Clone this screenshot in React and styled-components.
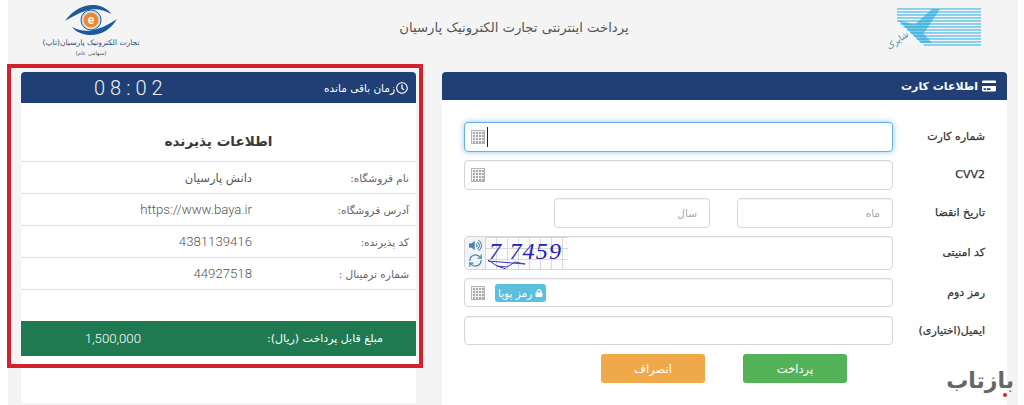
import React from 'react';
import styled, { createGlobalStyle } from 'styled-components';
import { FaCreditCard, FaRegClock, FaVolumeUp, FaLock } from 'react-icons/fa';
import { RefreshCw } from 'lucide-react';

const GlobalStyle = createGlobalStyle`
  html, body {
    margin: 0;
    padding: 0;
    background: #fff;
  }
  * {
    box-sizing: border-box;
  }
`;

const Screen = styled.div`
  position: relative;
  width: 1024px;
  height: 405px;
  overflow: hidden;
  background: #fff;
  font-family: "DejaVu Sans", "Noto Sans", sans-serif;
  padding: 0 6px 0 8px;
`;

const Page = styled.div`
  height: 100%;
  background: #f4f4f4;
  padding: 0 11px 0 13px;
`;

const TopBar = styled.header`
  height: 72px;
  padding: 0 26px 14px 21px;
  display: flex;
  justify-content: space-between;
  align-items: center;
`;

const TopTitle = styled.h1`
  margin: 0 0 4px;
  font-size: 13.2px;
  font-weight: 400;
  color: #555;
`;

const ParsianLogo = styled.div`
  width: 98px;
  align-self: flex-start;
  display: flex;
  flex-direction: column;
  align-items: center;
  padding-top: 4px;
`;

const LogoCaption = styled.span`
  font-size: ${props => props.size}px;
  line-height: 11px;
  color: ${props => props.color};
  white-space: nowrap;
`;

const Columns = styled.main`
  display: flex;
  gap: 26px;
  align-items: flex-start;
`;

const Card = styled.section`
  width: ${props => props.width}px;
  height: ${props => props.height}px;
  background: #fff;
  display: flex;
  flex-direction: column;
`;

const CardHeader = styled.div`
  height: ${props => props.height}px;
  flex: none;
  background: #203f74;
  color: #fff;
  border-radius: 4px 4px 0 0;
  display: flex;
  align-items: center;
  justify-content: space-between;
  padding: ${props => props.padding};
`;

const HeaderLabel = styled.div`
  display: flex;
  align-items: center;
  gap: ${props => props.gap}px;
  font-size: ${props => props.size}px;
  font-weight: ${props => props.weight};
`;

const Timer = styled.div`
  direction: ltr;
  font-family: Roboto, "Liberation Sans", sans-serif;
  font-weight: 300;
  font-size: 20px;
  letter-spacing: 5px;
  color: #eef2f8;
`;

const MerchantTitle = styled.h2`
  height: 59px;
  margin: 0;
  padding-top: 26px;
  text-align: center;
  font-size: 13.6px;
  line-height: 24px;
  font-weight: 700;
  color: #3a3a3a;
  border-bottom: 1px solid #dedede;
`;

const InfoRow = styled.div`
  height: 32px;
  display: grid;
  grid-template-columns: 164px 1fr;
  align-items: center;
  border-bottom: 1px solid #dedede;
`;

const InfoLabel = styled.span`
  padding-right: 7px;
  font-size: 10.5px;
  color: #666;
`;

const InfoValue = styled.span`
  font-size: ${props => (props.latin ? 13.2 : 11.5)}px;
  font-family: ${props => (props.latin ? 'Roboto, "Liberation Sans", sans-serif' : 'inherit')};
  font-weight: ${props => (props.latin ? 300 : 400)};
  color: #555;
`;

const AmountBar = styled.div`
  margin-top: 31px;
  height: 35px;
  background: #1f7a52;
  color: #fff;
  display: grid;
  grid-template-columns: 275px 120px;
  align-items: center;
`;

const AmountLabel = styled.span`
  padding-right: 33px;
  font-size: 11px;
  white-space: nowrap;
`;

const AmountValue = styled.span`
  direction: ltr;
  text-align: right;
  font-family: Roboto, "Liberation Sans", sans-serif;
  font-weight: 300;
  font-size: 13.2px;
`;

const Form = styled.form`
  padding: 22px 22px 0;
  display: flex;
  flex-direction: column;
  gap: 8px;
`;

const FormRow = styled.div`
  display: grid;
  grid-template-columns: 92px 1fr;
  align-items: center;
  height: ${props => props.height}px;
  margin-top: ${props => props.top || 0}px;
`;

const FormLabel = styled.label`
  padding-bottom: 1px;
  font-size: 11px;
  font-weight: 400;
  color: #333;
  -webkit-text-stroke: 0.25px #333;
  white-space: nowrap;
`;

const Field = styled.div`
  height: 100%;
  width: 100%;
  background: #fff;
  border: 1px solid ${props => (props.focused ? '#66afe9' : '#d6d6d6')};
  border-radius: 4px;
  box-shadow: ${props => (props.focused ? '0 0 6px rgba(102, 175, 233, 0.7)' : 'inset 0 1px 1px rgba(0, 0, 0, 0.04)')};
  display: flex;
  align-items: center;
  padding: 0 6px;
  direction: ltr;
  overflow: hidden;
`;

const DateFields = styled.div`
  height: 100%;
  display: flex;
  gap: 27px;
`;

const DateField = styled(Field)`
  width: 156px;
  direction: rtl;
  padding: 0 12px;
`;

const Placeholder = styled.span`
  font-size: 10.5px;
  color: #aaa;
`;

const Caret = styled.span`
  width: 1px;
  height: 20px;
  margin-left: 2px;
  background: #222;
`;

const CaptchaField = styled(Field)`
  padding: 0;
`;

const CaptchaTools = styled.div`
  width: 20px;
  height: 100%;
  flex: none;
  display: flex;
  flex-direction: column;
  align-items: center;
  justify-content: space-around;
  padding: 1px 0;
  background: #f1f4f7;
  color: #4a86ad;
  font-size: 13px;
`;

const CaptchaImage = styled.div`
  position: relative;
  width: 83px;
  height: 100%;
  padding-left: 4px;
  background-color: #fbfbfb;
  background-image:
    linear-gradient(#d8d8d8 1px, transparent 1px),
    linear-gradient(90deg, #d8d8d8 1px, transparent 1px);
  background-size: 11px 11px;
  font-family: "Liberation Serif", serif;
  font-style: italic;
  font-size: 24px;
  line-height: 28px;
  letter-spacing: 1.2px;
  color: #2222b4;
  white-space: pre;
`;

const CaptchaScratch = styled.svg`
  position: absolute;
  left: 0;
  top: 0;
`;

const Badge = styled.span`
  margin-left: 10px;
  height: 18px;
  padding: 0 3px;
  display: inline-flex;
  align-items: center;
  gap: 3px;
  border-radius: 3px;
  background: #5bc0de;
  color: #fff;
  font-size: 10.5px;
  direction: rtl;
  white-space: nowrap;
`;

const Buttons = styled.div`
  margin-top: 1px;
  padding-right: 138px;
  display: flex;
  gap: 38px;
`;

const ActionButton = styled.button`
  width: 104px;
  height: 29px;
  border: none;
  border-radius: 3px;
  background: ${props => props.color};
  color: #fff;
  font-family: inherit;
  font-size: 11.5px;
`;

const Highlight = styled.div`
  position: absolute;
  left: 7px;
  top: 64px;
  width: 416px;
  height: 304px;
  border: 4px solid #d2222e;
  pointer-events: none;
`;

const Watermark = styled.div`
  position: absolute;
  right: 10px;
  bottom: 8px;
  font-size: 22px;
  line-height: 32px;
  font-weight: 700;
  color: #666;
`;

const WatermarkDot = styled.span`
  position: absolute;
  right: 7px;
  bottom: 0;
  width: 4px;
  height: 4px;
  border-radius: 50%;
  background: #d2222e;
`;

const ShaparakMark = () => (
  <svg width="93" height="46" viewBox="0 0 93 46" style={{ overflow: 'visible' }}>
    {Array.from({ length: 13 }, (_, i) => {
      const y = 2 + i * 3;
      const left = 9 + Math.max(0, y - 14) * 1.1;
      return <rect key={i} x={left} y={y} width={93 - left} height="1.9" fill="#86cfea" />;
    })}
    <path d="M10 14 L28 19 L44 37 L33 37Z M24 21 L44 3 L52 3 L36 27Z" fill="#4cb8e0" />
    {Array.from({ length: 12 }, (_, i) => (
      <rect key={i} x="9" y={4.2 + i * 3} width="45" height="0.5" fill="#fff" opacity="0.55" />
    ))}
    <text x="10" y="37" fontSize="8.5" fill="#3f8fa5" textAnchor="middle" transform="rotate(-35 10 35)">شاپرک</text>
  </svg>
);

const ParsianMark = () => (
  <svg width="52" height="33" viewBox="0 0 52 33">
    <path d="M0 17 C8 5 20 0 30 1 C38 2 44 6 46 10 C38 5 28 4 20 7 C13 9.5 7 13 0 17Z" fill="#1d5a99" />
    <path d="M52 15 C46 26 34 32 24 31 C16 30.5 10 27 7 23 C14 27 24 28 32 25 C39 23 46 19 52 15Z" fill="#1d5a99" />
    <circle cx="26" cy="16" r="10" fill="#cfe0ee" stroke="#1d5a99" strokeWidth="1" />
    <circle cx="26" cy="16" r="7.5" fill="#ef8a2c" />
    <text x="26" y="20" fontSize="12" fontWeight="700" fill="#fff" textAnchor="middle" fontFamily="Liberation Sans">e</text>
  </svg>
);

const KeypadIcon = () => (
  <svg width="14" height="14" viewBox="0 0 14 14" style={{ flex: 'none' }}>
    <rect x="0.5" y="0.5" width="13" height="13" fill="#f2f2f2" stroke="#b5b5b5" />
    {[2, 5, 8, 11].map(y =>
      [2, 5, 8, 11].map(x => <rect key={`${x}-${y}`} x={x} y={y} width="2" height="2" fill="#a8a8a8" />)
    )}
  </svg>
);

const merchantRows = [
  { label: 'نام فروشگاه:', value: 'دانش پارسیان' },
  { label: 'آدرس فروشگاه:', value: 'https://www.baya.ir', latin: true },
  { label: 'کد پذیرنده:', value: '4381139416', latin: true },
  { label: 'شماره ترمینال :', value: '44927518', latin: true },
];

const App = () => (
  <Screen dir="rtl">
    <GlobalStyle />
    <Page>
      <TopBar>
        <ShaparakMark />
        <TopTitle>پرداخت اینترنتی تجارت الکترونیک پارسیان</TopTitle>
        <ParsianLogo>
          <ParsianMark />
          <LogoCaption size={7.6} color="#2c4f80">تجارت الکترونیک پارسیان(تاپ)</LogoCaption>
          <LogoCaption size={5.5} color="#555">(سهامی عام)</LogoCaption>
        </ParsianLogo>
      </TopBar>

      <Columns>
        <Card width={565} height={333}>
          <CardHeader height={28} padding="0 11px">
            <HeaderLabel size={11} weight={700} gap={4}>
              <FaCreditCard size={14} />
              اطلاعات کارت
            </HeaderLabel>
          </CardHeader>
          <Form>
            <FormRow height={30}>
              <FormLabel>شماره کارت</FormLabel>
              <Field focused>
                <KeypadIcon />
                <Caret />
              </Field>
            </FormRow>
            <FormRow height={30}>
              <FormLabel>CVV2</FormLabel>
              <Field>
                <KeypadIcon />
              </Field>
            </FormRow>
            <FormRow height={30}>
              <FormLabel>تاریخ انقضا</FormLabel>
              <DateFields>
                <DateField><Placeholder>ماه</Placeholder></DateField>
                <DateField><Placeholder>سال</Placeholder></DateField>
              </DateFields>
            </FormRow>
            <FormRow height={34}>
              <FormLabel>کد امنیتی</FormLabel>
              <CaptchaField>
                <CaptchaTools>
                  <FaVolumeUp />
                  <RefreshCw size={15} strokeWidth={2} />
                </CaptchaTools>
                <CaptchaImage>
                  7 7459
                  <CaptchaScratch width="83" height="34" viewBox="0 0 83 34">
                    <path d="M3 23 L12 29 L22 30 L30 25 L40 27 M12 29 L21 32" fill="none" stroke="#3a3ab8" strokeWidth="1" />
                    <path d="M3 24 L40 27" fill="none" stroke="#3a3ab8" strokeWidth="1" />
                  </CaptchaScratch>
                </CaptchaImage>
              </CaptchaField>
            </FormRow>
            <FormRow height={29}>
              <FormLabel>رمز دوم</FormLabel>
              <Field>
                <KeypadIcon />
                <Badge>
                  <FaLock size={8} />
                  رمز پویا
                </Badge>
              </Field>
            </FormRow>
            <FormRow height={29} top={1}>
              <FormLabel>ایمیل(اختیاری)</FormLabel>
              <Field />
            </FormRow>
            <Buttons>
              <ActionButton type="button" color="#54b258">پرداخت</ActionButton>
              <ActionButton type="button" color="#efa84a">انصراف</ActionButton>
            </Buttons>
          </Form>
        </Card>

        <Card width={395} height={331}>
          <CardHeader height={31} padding="0 8px 0 73px">
            <HeaderLabel size={10.5} weight={400} gap={1}>
              <FaRegClock size={12} />
              زمان باقی مانده
            </HeaderLabel>
            <Timer>08:02</Timer>
          </CardHeader>
          <MerchantTitle>اطلاعات پذیرنده</MerchantTitle>
          {merchantRows.map(row => (
            <InfoRow key={row.label}>
              <InfoLabel>{row.label}</InfoLabel>
              <InfoValue latin={row.latin}>{row.value}</InfoValue>
            </InfoRow>
          ))}
          <AmountBar>
            <AmountLabel>مبلغ قابل پرداخت (ریال):</AmountLabel>
            <AmountValue>1,500,000</AmountValue>
          </AmountBar>
        </Card>
      </Columns>
    </Page>
    <Highlight />
    <Watermark>
      بازتاب
      <WatermarkDot />
    </Watermark>
  </Screen>
);

export default App;
